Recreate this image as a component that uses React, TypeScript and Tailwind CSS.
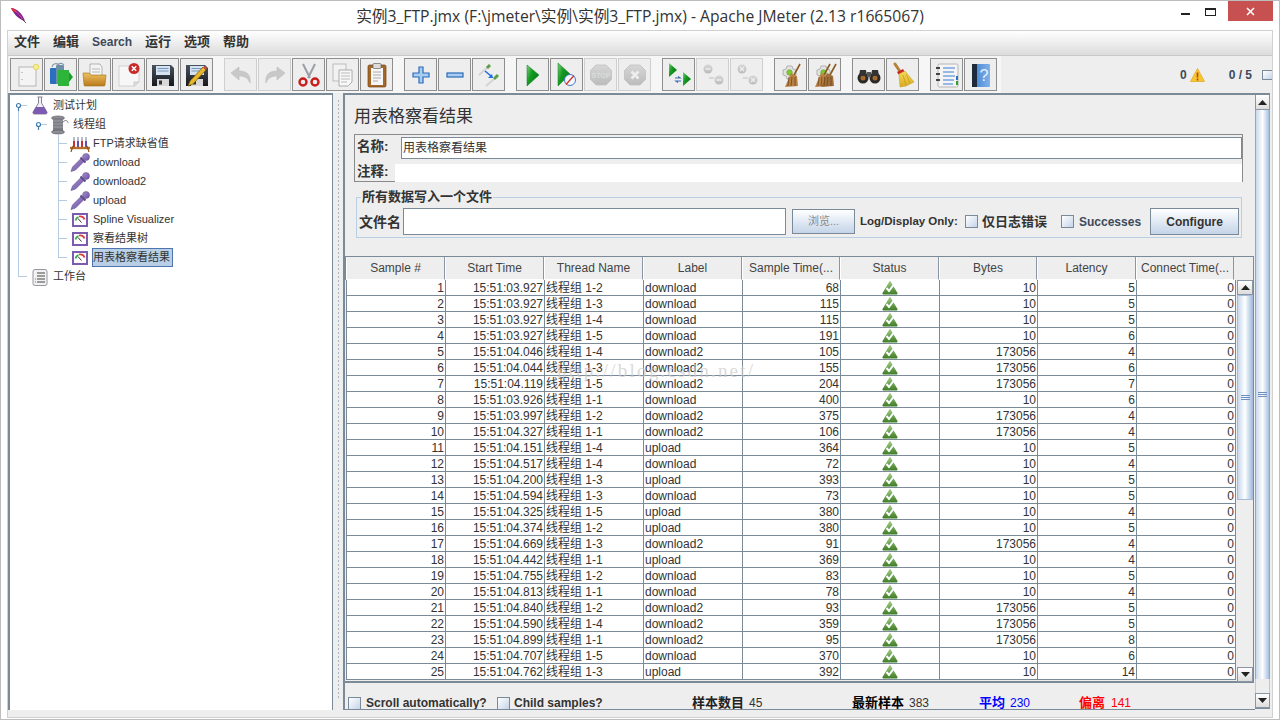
import React from "react";

const SANS = "font-['Liberation_Sans','Noto_Sans_CJK_SC',sans-serif]";

type Row = [number, string, string, string, number, number, number];
const rows: Row[] = [
  [1, "15:51:03.927", "线程组 1-2", "download", 68, 10, 5],
  [2, "15:51:03.927", "线程组 1-3", "download", 115, 10, 5],
  [3, "15:51:03.927", "线程组 1-4", "download", 115, 10, 5],
  [4, "15:51:03.927", "线程组 1-5", "download", 191, 10, 6],
  [5, "15:51:04.046", "线程组 1-4", "download2", 105, 173056, 4],
  [6, "15:51:04.044", "线程组 1-3", "download2", 155, 173056, 6],
  [7, "15:51:04.119", "线程组 1-5", "download2", 204, 173056, 7],
  [8, "15:51:03.926", "线程组 1-1", "download", 400, 10, 6],
  [9, "15:51:03.997", "线程组 1-2", "download2", 375, 173056, 4],
  [10, "15:51:04.327", "线程组 1-1", "download2", 106, 173056, 4],
  [11, "15:51:04.151", "线程组 1-4", "upload", 364, 10, 5],
  [12, "15:51:04.517", "线程组 1-4", "download", 72, 10, 4],
  [13, "15:51:04.200", "线程组 1-3", "upload", 393, 10, 5],
  [14, "15:51:04.594", "线程组 1-3", "download", 73, 10, 5],
  [15, "15:51:04.325", "线程组 1-5", "upload", 380, 10, 4],
  [16, "15:51:04.374", "线程组 1-2", "upload", 380, 10, 5],
  [17, "15:51:04.669", "线程组 1-3", "download2", 91, 173056, 4],
  [18, "15:51:04.442", "线程组 1-1", "upload", 369, 10, 4],
  [19, "15:51:04.755", "线程组 1-2", "download", 83, 10, 5],
  [20, "15:51:04.813", "线程组 1-1", "download", 78, 10, 4],
  [21, "15:51:04.840", "线程组 1-2", "download2", 93, 173056, 5],
  [22, "15:51:04.590", "线程组 1-4", "download2", 359, 173056, 5],
  [23, "15:51:04.899", "线程组 1-1", "download2", 95, 173056, 8],
  [24, "15:51:04.707", "线程组 1-5", "download", 370, 10, 6],
  [25, "15:51:04.762", "线程组 1-3", "upload", 392, 10, 14],
];

const S = ({ children, w = 26, h = 26, vb = "0 0 26 26" }: { children: React.ReactNode; w?: number; h?: number; vb?: string }) => (
  <svg width={w} height={h} viewBox={vb} className="block shrink-0">{children}</svg>
);

const Gradients = () => (
  <svg width="0" height="0" className="absolute">
    <defs>
      <linearGradient id="gGreen" x1="0" y1="0" x2="1" y2="0.6">
        <stop offset="0" stopColor="#7fd07f" />
        <stop offset="0.45" stopColor="#149a22" />
        <stop offset="1" stopColor="#0b7a17" />
      </linearGradient>
      <linearGradient id="gFolder" x1="0" y1="0" x2="0" y2="1">
        <stop offset="0" stopColor="#f0c060" />
        <stop offset="1" stopColor="#b87a1c" />
      </linearGradient>
      <linearGradient id="gGray" x1="0" y1="0" x2="0" y2="1">
        <stop offset="0" stopColor="#d6d6d6" />
        <stop offset="1" stopColor="#bcbcbc" />
      </linearGradient>
      <linearGradient id="gFloppy" x1="0" y1="0" x2="0" y2="1">
        <stop offset="0" stopColor="#4a5260" />
        <stop offset="1" stopColor="#16181c" />
      </linearGradient>
      <linearGradient id="gOk" x1="0" y1="0" x2="0" y2="1">
        <stop offset="0" stopColor="#a7d08a" />
        <stop offset="1" stopColor="#3c7d25" />
      </linearGradient>
      <linearGradient id="gHelp" x1="0" y1="0" x2="1" y2="0">
        <stop offset="0" stopColor="#3d7fd0" />
        <stop offset="1" stopColor="#80b2ea" />
      </linearGradient>
      <linearGradient id="gBroom" x1="0" y1="0" x2="0" y2="1">
        <stop offset="0" stopColor="#f5dc5a" />
        <stop offset="1" stopColor="#d9a91e" />
      </linearGradient>
      <linearGradient id="gDrop" x1="0" y1="0" x2="1" y2="1">
        <stop offset="0" stopColor="#a78fd0" />
        <stop offset="1" stopColor="#6f52a5" />
      </linearGradient>
    </defs>
  </svg>
);

const Floppy = () => (
  <>
    <path d="M2 3h19l3 3v18H2z" fill="url(#gFloppy)" />
    <rect x="6" y="4" width="14" height="9" fill="#d5e2f0" />
    <path d="M7.500 6.500h11M7.500 9h11" stroke="#6d8fb8" strokeWidth="0.9" />
    <rect x="7" y="17" width="12" height="7" fill="#d8d8d8" />
    <rect x="9" y="18.500" width="3" height="4" fill="#333" />
  </>
);

const Octagon = () => <path d="M8 3h10l5.500 5.500v9L18 23H8l-5.500-5.500v-9z" fill="url(#gGray)" stroke="#c0c0c0" strokeWidth="0.8" />;

const Broom = ({ x = 0, dark = false }: { x?: number; dark?: boolean }) => (
  <g transform={`translate(${x} 0)`}>
    <path d="M22 2l-6 11" stroke="#8a5a22" strokeWidth="1.600" />
    <path d="M13 11l6 3 1 10-13 1z" fill={dark ? "#a06e3a" : "#b98245"} />
    <path d="M11 15l-1 9M14 15l-1 9M17 15v9" stroke="#6e4518" strokeWidth="0.8" />
  </g>
);

const Gear = () => (
  <>
    <path d="M9 4h5l1 3 3 1v5l-3 1-1 3H9l-1-3-3-1V8l3-1z" fill="#e2e2e2" stroke="#a5a5a5" strokeWidth="0.8" />
    <circle cx="11.500" cy="10.500" r="2.800" fill="#80c838" stroke="#5a9a20" strokeWidth="0.5" />
  </>
);

const icons: Record<string, React.ReactNode> = {
  new: <S><rect x="5" y="5" width="17" height="19" fill="#f4f4f4" stroke="#a8a8a8" strokeWidth="0.8" /><path d="M8 10v1M8 17v1" stroke="#999" /><circle cx="22" cy="5" r="2.800" fill="#f7ee8c" stroke="#e2cf50" strokeWidth="0.800" /></S>,
  templates: <S><rect x="2" y="6" width="7" height="16" rx="1" fill="#2a6fc0" /><rect x="8" y="3" width="8" height="19" rx="1" fill="#6d8fa8" /><rect x="10" y="8" width="11" height="16" fill="#2db53a" /><path d="M21 10l4 5-4 5z" fill="#1f9a2e" /><path d="M4 5a4 4 0 0 1 7-2M9 4a4 4 0 0 1 7-1" fill="none" stroke="#8a98a8" strokeWidth="1.200" /></S>,
  open: <S><path d="M8 2h10l2 3v10H8z" fill="#f4f4f4" stroke="#999" strokeWidth="0.7" /><path d="M10 7h8M10 10h8" stroke="#aaa" strokeWidth="0.8" /><path d="M1 11h6l2 2h15l-1 10a1 1 0 0 1-1 1H3a1 1 0 0 1-1-1z" fill="url(#gFolder)" stroke="#a06e1a" strokeWidth="0.6" /></S>,
  close: <S><path d="M3 4h14v0l6 4v12l-4 4H3z" fill="#f7f7f7" stroke="#c8c8c8" strokeWidth="0.8" /><path d="M23 20h-5v4" fill="#ddd" stroke="#bbb" strokeWidth="0.7" /><circle cx="18" cy="6.500" r="5.500" fill="#c92a2a" /><path d="M15.800 4.300l4.400 4.400M20.200 4.300l-4.400 4.400" stroke="#fff" strokeWidth="1.500" /></S>,
  save: <S><Floppy /></S>,
  saveas: <S><Floppy /><path d="M4 24l2-5L19 5l3 3L9 22z" fill="#e8b82a" stroke="#6b5010" strokeWidth="0.7" /><path d="M19 5l3 3 1-2-2-2z" fill="#d34a3a" /></S>,
  undo: <S><path d="M3 11l8-6v4c8 0 12 4 11 12-2-5-5-7-11-7v4z" fill="#c8c8c8" stroke="#bcbcbc" strokeWidth="0.6" /></S>,
  redo: <S><path d="M23 11l-8-6v4C7 9 3 13 4 21c2-5 5-7 11-7v4z" fill="#c8c8c8" stroke="#bcbcbc" strokeWidth="0.6" /></S>,
  cut: <S><path d="M7 2l7 14M19 2l-7 14" stroke="#9aa0a6" strokeWidth="2" /><circle cx="7" cy="20" r="3.500" fill="none" stroke="#c81e1e" strokeWidth="2.400" /><circle cx="19" cy="20" r="3.500" fill="none" stroke="#c81e1e" strokeWidth="2.400" /></S>,
  copy: <S><rect x="3" y="2" width="13" height="17" fill="#f2f2f2" stroke="#b0b0b0" strokeWidth="0.8" /><path d="M9 8h13v12l-4 4H9z" fill="#f8f8f8" stroke="#9a9a9a" strokeWidth="0.8" /><path d="M11 11h9M11 14h9M11 17h9M11 20h6" stroke="#aaa" strokeWidth="0.8" /></S>,
  paste: <S><rect x="4" y="3" width="18" height="22" rx="1.500" fill="#a5672a" stroke="#6e4316" strokeWidth="0.7" /><rect x="7" y="6" width="12" height="17" fill="#f6f6f6" /><rect x="9" y="1.500" width="8" height="5" rx="1" fill="#dcdcdc" stroke="#666" strokeWidth="0.7" /><path d="M9 10h8M9 13h8M9 16h8M9 19h5" stroke="#999" strokeWidth="0.8" /></S>,
  plus: <S><path d="M11 5h4v6h6v4h-6v6h-4v-6H5v-4h6z" fill="#a8cdf0" stroke="#2a6cb8" strokeWidth="1.200" /></S>,
  minus: <S><rect x="5" y="11" width="16" height="4" fill="#a8cdf0" stroke="#2a6cb8" strokeWidth="1.200" /></S>,
  toggle: <S><path d="M3 13l9-8" stroke="#d4d4d4" strokeWidth="2" /><path d="M11 6l3-3" stroke="#5f9e48" strokeWidth="3" /><path d="M10 24l8-7" stroke="#d4d4d4" strokeWidth="2" /><path d="M18 17l4-4" stroke="#5f9e48" strokeWidth="3" /><path d="M9 9l6 5" stroke="#1f6fe0" strokeWidth="1.600" /><path d="M17 16l-5 0 4-4z" fill="#1f6fe0" /></S>,
  start: <S><path d="M7 3l12 10L7 24z" fill="url(#gGreen)" stroke="#0e7a1a" strokeWidth="0.5" /></S>,
  nt: <S><path d="M4 1l12 11L4 24z" fill="url(#gGreen)" stroke="#0e7a1a" strokeWidth="0.5" /><circle cx="16" cy="18" r="5.500" fill="#f4f8fc" stroke="#3f7bc8" strokeWidth="1" /><path d="M12 22.500l8-9" stroke="#d23030" strokeWidth="1.300" /></S>,
  stop: <S><Octagon /><text x="13" y="16" textAnchor="middle" fontSize="7" fontWeight="700" fill="#dcdcdc" fontFamily="Liberation Sans, sans-serif">STOP</text></S>,
  shutdown: <S><Octagon /><path d="M9.500 9.500l7 7M16.500 9.500l-7 7" stroke="#eee" strokeWidth="2.600" /></S>,
  remote: <S><path d="M3 1l8 7-8 7z" fill="url(#gGreen)" /><path d="M17 10l8 7-8 7z" fill="url(#gGreen)" /><path d="M9 16h5l-2-1.500M15 19h-5l2 1.500" fill="none" stroke="#3c6cb8" strokeWidth="1.200" /></S>,
  rstop: <S><circle cx="8" cy="7" r="4.500" fill="url(#gGray)" /><circle cx="19" cy="18" r="4.500" fill="url(#gGray)" /><path d="M5.500 7h5M16.500 18h5" stroke="#eee" strokeWidth="1.300" /><path d="M9 16h5" stroke="#c8c8c8" strokeWidth="1.200" /></S>,
  rshut: <S><circle cx="8" cy="7" r="4.500" fill="url(#gGray)" /><circle cx="19" cy="18" r="4.500" fill="url(#gGray)" /><path d="M6 5l4 4M10 5l-4 4M17 16l4 4M21 16l-4 4" stroke="#eee" strokeWidth="1.300" /><path d="M9 16h5" stroke="#c8c8c8" strokeWidth="1.200" /></S>,
  clear: <S><Gear /><Broom /></S>,
  clearall: <S><Gear /><Broom x={-4} /><Broom x={2} dark /></S>,
  search: <S><circle cx="7" cy="16" r="5.500" fill="#2a2a2a" /><circle cx="19" cy="16" r="5.500" fill="#2a2a2a" /><circle cx="7" cy="16" r="2.500" fill="#a56a2a" /><circle cx="19" cy="16" r="2.500" fill="#a56a2a" /><path d="M4 8h6l1 6H3zM16 8h6l1 6h-8z" fill="#333" /><rect x="11" y="10" width="4" height="5" fill="#555" /></S>,
  broom: <S><path d="M5 2l6 9" stroke="#b5843a" strokeWidth="3" strokeLinecap="round" /><path d="M7 10l6-3 1.500 2.500-6 3z" fill="#c8252b" /><path d="M9 12l6-3 9 11-8 4-6 1z" fill="url(#gBroom)" stroke="#c09820" strokeWidth="0.5" /><path d="M13 13l3 10M16 12l4 9" stroke="#c09820" strokeWidth="0.7" /></S>,
  log: <S><rect x="4" y="2" width="20" height="23" rx="1.500" fill="#f4f4f4" stroke="#a5a5a5" strokeWidth="0.8" /><path d="M9 6h12M9 10h11M9 14h12M9 18h11M9 22h10" stroke="#3a7ad6" strokeWidth="1.200" /><path d="M2 6h4M2 12h4M2 18h4" stroke="#444" strokeWidth="1.800" /><rect x="22" y="14" width="2" height="4" fill="#2c6fc0" /><rect x="22" y="19" width="2" height="4" fill="#2ca02c" /></S>,
  help: <S><rect x="4" y="2" width="18" height="23" rx="1" fill="url(#gHelp)" /><rect x="4" y="2" width="5" height="23" fill="#1d2a3a" /><text x="16" y="19" textAnchor="middle" fontSize="16" fill="#e8f2ff" fontFamily="Liberation Sans, sans-serif">?</text></S>,
};

const ToolBtn = ({ name, off = false }: { name: string; off?: boolean }) => (
  <div className={`flex h-[33px] w-[33px] items-center justify-center border bg-[#eeeeee] ${off ? "border-[#cfcfcf]" : "border-[#8e8e8e]"}`}>
    {icons[name]}
  </div>
);

const groups: [string, boolean?][][] = [
  [["new"], ["templates"], ["open"], ["close"], ["save"], ["saveas"]],
  [["undo", true], ["redo", true], ["cut"], ["copy"], ["paste"]],
  [["plus"], ["minus"], ["toggle"]],
  [["start"], ["nt"], ["stop", true], ["shutdown", true]],
  [["remote"], ["rstop", true], ["rshut", true]],
  [["clear"], ["clearall"]],
  [["search"], ["broom"]],
  [["log"], ["help"]],
];

const Flask = () => (
  <S w={18} h={19} vb="0 0 18 19">
    <path d="M6.500 1h5M7.500 1v6L2 16a1.500 1.500 0 0 0 1.500 2h11a1.500 1.500 0 0 0 1.500-2l-5.500-9V1" fill="#f2eef8" stroke="#7d7d8a" strokeWidth="0.9" />
    <path d="M5 11h8l3 5a1.500 1.500 0 0 1-1.500 2h-11A1.500 1.500 0 0 1 2 16z" fill="#7d5bb0" />
  </S>
);
const Spool = () => (
  <S w={20} h={20} vb="0 0 20 20">
    <ellipse cx="8" cy="3" rx="6.500" ry="2" fill="#8d8d94" stroke="#55555c" strokeWidth="0.6" />
    <rect x="3" y="3" width="10" height="13" fill="#7d7d86" />
    <path d="M3 6h10M3 9h10M3 12h10" stroke="#a8a8ae" strokeWidth="0.8" />
    <ellipse cx="8" cy="17" rx="6.500" ry="2" fill="#8d8d94" stroke="#55555c" strokeWidth="0.6" />
    <path d="M13 7c3-3 5-1 5 1" fill="none" stroke="#777" strokeWidth="0.9" />
  </S>
);
const Rack = () => (
  <S w={20} h={16} vb="0 0 20 16">
    <path d="M4 1v10M8 1v10M12 1v10M16 1v10" stroke="#b9b9c8" strokeWidth="2" />
    <path d="M4 5v6M12 5v6" stroke="#c7303a" strokeWidth="2" />
    <path d="M8 5v6M16 5v6" stroke="#5d4fb0" strokeWidth="2" />
    <path d="M0 12h20" stroke="#b3702a" strokeWidth="2.400" />
    <path d="M3 10l-2 6M17 10l2 6" stroke="#8a5418" strokeWidth="1.200" />
  </S>
);
const Pipette = () => (
  <S w={20} h={19} vb="0 0 20 19">
    <path d="M1 18.500l1.500-4.500L11 5.500 14 8.500 5.500 17z" fill="url(#gDrop)" stroke="#5c4a86" strokeWidth="0.6" />
    <path d="M10.500 4.500l5 5" stroke="#5c4a86" strokeWidth="2" />
    <circle cx="16" cy="4" r="3.500" fill="url(#gDrop)" stroke="#5c4a86" strokeWidth="0.5" />
  </S>
);
const Meter = () => (
  <S w={16} h={14} vb="0 0 16 14">
    <rect x="1" y="1" width="14" height="12" fill="#fff" stroke="#7d5bb0" strokeWidth="2" />
    <path d="M3.500 7.500a4.500 4.500 0 0 1 3-3.500" fill="none" stroke="#3da84a" strokeWidth="1.800" />
    <path d="M7 3.500a4.500 4.500 0 0 1 5.500 3" fill="none" stroke="#d8403a" strokeWidth="1.800" />
    <path d="M9.500 9.500L6 5.500" stroke="#333" strokeWidth="1" />
  </S>
);
const Workbench = () => (
  <S w={16} h={18} vb="0 0 16 18">
    <rect x="1" y="1.500" width="14" height="16" rx="2" fill="#f2f2f2" stroke="#8f8a96" strokeWidth="0.9" />
    <path d="M5 5h8M5 8h8M5 11h8M5 14h8" stroke="#444" strokeWidth="1" />
    <path d="M3 11h1M3 14h1" stroke="#3aa04a" strokeWidth="1" />
  </S>
);

const Guide = ({ kind, width }: { kind: string; width: number }) => {
  const c = "#b4cbe0";
  return (
    <svg width={width} height={19} className="block shrink-0">
      {kind === "root" && (
        <>
          <path d="M8.500 10v9M8 9.500h9" stroke={c} fill="none" />
          <circle cx="8.500" cy="9.500" r="2" fill="#fff" stroke="#3f7ab0" strokeWidth="1.200" />
          <path d="M8.500 12v3" stroke="#3f7ab0" strokeWidth="1.200" />
        </>
      )}
      {kind === "group" && (
        <>
          <path d="M8.500 0v19M28 9.500h9M48.500 15v4" stroke={c} fill="none" />
          <circle cx="28.500" cy="9.500" r="2" fill="#fff" stroke="#3f7ab0" strokeWidth="1.200" />
          <path d="M28.500 12v3" stroke="#3f7ab0" strokeWidth="1.200" />
        </>
      )}
      {kind === "leaf" && <path d="M8.500 0v19M48.500 0v19M48 9.500h9" stroke={c} fill="none" />}
      {kind === "last" && <path d="M8.500 0v19M48.500 0v10M48 9.500h9" stroke={c} fill="none" />}
      {kind === "end" && <path d="M8.500 0v10M8 9.500h9" stroke={c} fill="none" />}
    </svg>
  );
};

const tree: { kind: string; label: string; icon: React.ReactNode; sel?: boolean }[] = [
  { kind: "root", label: "测试计划", icon: <Flask /> },
  { kind: "group", label: "线程组", icon: <Spool /> },
  { kind: "leaf", label: "FTP请求缺省值", icon: <Rack /> },
  { kind: "leaf", label: "download", icon: <Pipette /> },
  { kind: "leaf", label: "download2", icon: <Pipette /> },
  { kind: "leaf", label: "upload", icon: <Pipette /> },
  { kind: "leaf", label: "Spline Visualizer", icon: <Meter /> },
  { kind: "leaf", label: "察看结果树", icon: <Meter /> },
  { kind: "last", label: "用表格察看结果", icon: <Meter />, sel: true },
  { kind: "end", label: "工作台", icon: <Workbench /> },
];

const guideWidth: Record<string, number> = { root: 20, group: 40, leaf: 60, last: 60, end: 20 };

const TreeRow = ({ kind, label, icon, sel }: (typeof tree)[number]) => (
  <div className="flex h-[19px] items-center">
    <Guide kind={kind} width={guideWidth[kind]} />
    <div className="flex w-[20px] shrink-0 justify-center">{icon}</div>
    <span className={`ml-[2px] pr-[2px] text-[11px] leading-[17px] whitespace-nowrap text-[#333] ${sel ? "border border-[#4f74b0] bg-[#b8cfe5]" : "border border-transparent"}`}>{label}</span>
  </div>
);

const Check = () => <div className="h-[13px] w-[13px] shrink-0 border border-[#7a8a99] bg-gradient-to-br from-white to-[#c4d4e8]" />;

const Status = () => (
  <svg width={16} height={15} viewBox="0 0 16 15" className="block">
    <path d="M8 0.500L15.500 13a1 1 0 0 1-1 1.500h-13a1 1 0 0 1-1-1.500z" fill="url(#gOk)" />
    <path d="M4.500 8l2.500 3 4.500-6" fill="none" stroke="#fff" strokeWidth="2" />
  </svg>
);

const Grip = () => (
  <div className="flex flex-col gap-px">
    <div className="h-px w-[9px] bg-[#6f8fc0]" />
    <div className="h-px w-[9px] bg-[#6f8fc0]" />
    <div className="h-px w-[9px] bg-[#6f8fc0]" />
  </div>
);

const Arrow = ({ up = false }: { up?: boolean }) => (
  <svg width={9} height={5} viewBox="0 0 9 5" className="block">
    <path d={up ? "M0 5L4.500 0 9 5z" : "M0 0l4.500 5L9 0z"} fill="#222" />
  </svg>
);

const headers = ["Sample #", "Start Time", "Thread Name", "Label", "Sample Time(...", "Status", "Bytes", "Latency", "Connect Time(..."];
const COLS = "grid grid-cols-[99px_99px_99px_99px_98px_99px_98px_99px_99px]";
const CELL = "h-[16px] overflow-hidden border-r border-b border-[#7a8a99] bg-white px-px text-[12px] leading-[17px] whitespace-nowrap text-[#333]";

export default function App() {
  return (
    <div className={`h-[720px] w-[1280px] overflow-hidden border border-[#bdbdbd] bg-white ${SANS}`}>
      <Gradients />
      {/* title bar */}
      <div className="flex h-[29px]">
        <div className="w-[50px] pt-[6px] pl-[9px]">
          <svg width={17} height={17} viewBox="0 0 17 17" className="block">
            <path d="M1 1c5 0 11 5 14 13-5-1-11-6-14-13z" fill="#7a1e90" />
            <path d="M1 1c2 0 4 1 6 3L4 5C3 4 2 3 1 1z" fill="#e03040" />
            <path d="M5 4c3 2 6 5 8 9" stroke="#e050a0" strokeWidth="1" fill="none" />
            <path d="M12 12l4 4" stroke="#333" strokeWidth="0.8" />
          </svg>
        </div>
        <div className="flex flex-1 justify-center pt-[2px] pl-[60px]">
          <span className="font-['Open_Sans','Noto_Sans_CJK_SC',sans-serif] text-[15.7px] leading-[27px] whitespace-nowrap text-[#333]">实例3_FTP.jmx (F:\jmeter\实例\实例3_FTP.jmx) - Apache JMeter (2.13 r1665067)</span>
        </div>
        <div className="flex h-[20px] items-start">
          <div className="flex h-[20px] w-[32px] items-start justify-center pt-[12px]"><div className="h-[2px] w-[9px] bg-[#222]" /></div>
          <div className="flex h-[20px] w-[27px] items-start justify-center pt-[7px] pr-[9px]"><div className="h-[8px] w-[11px] border border-t-2 border-[#222]" /></div>
          <div className="flex h-[20px] w-[45px] items-center justify-center bg-[#c75050]">
            <svg width={9} height={9} viewBox="0 0 9 9" className="block"><path d="M1 1l7 7M8 1L1 8" stroke="#fff" strokeWidth="1.500" /></svg>
          </div>
        </div>
        <div className="w-[6px]" />
      </div>

      {/* application frame */}
      <div className="mx-[6px] flex h-[688px] flex-col border-x border-t border-b border-[#d0d0d0] bg-[#eeeeee]">
        {/* menu */}
        <div className="flex h-[25px] shrink-0 items-center gap-[13px] border-b border-[#c8c8c8] bg-gradient-to-b from-white to-[#dcdcdc] pb-[2px] pl-[6px] text-[13px] font-bold text-[#333]">
          <span>文件</span>
          <span>编辑</span>
          <span className="text-[12px] text-[#3d4a5c]">Search</span>
          <span>运行</span>
          <span>选项</span>
          <span>帮助</span>
        </div>
        {/* toolbar */}
        <div className="flex h-[37px] shrink-0 items-center">
          <div className="ml-px flex h-[37px] items-center gap-[11px] bg-[#f6f6f6] pr-[4px] pl-[1px]">
            {groups.map((g, i) => (
              <div key={i} className="flex gap-px">
                {g.map(([n, off]) => (
                  <ToolBtn key={n} name={n} off={!!off} />
                ))}
              </div>
            ))}
          </div>
          <div className="flex flex-1 items-center justify-end gap-[3px] text-[12px] font-bold text-[#3d4a5c]">
            <span>0</span>
            <svg width={15} height={14} viewBox="0 0 15 14" className="block">
              <path d="M7.500 0.500L14.500 13.500H0.500z" fill="#f7c82e" stroke="#e0a020" strokeWidth="0.7" />
              <path d="M7.500 4.500v5M7.500 10.500v2" stroke="#b8401a" strokeWidth="1.600" />
            </svg>
            <span className="mr-[7px] ml-[21px]">0 / 5</span>
            <div className="h-[10px] w-[10px] border border-r-0 border-[#7a8a99] bg-gradient-to-br from-white to-[#c4d4e8]" />
          </div>
        </div>

        {/* main */}
        <div className="flex min-h-0 flex-1">
          {/* tree */}
          <div className="h-[617px] w-[325px] shrink-0 border-t-2 border-r border-l-2 border-[#7a8a99] bg-white pt-[1px]">
            {tree.map((t) => (
              <TreeRow key={t.label} {...t} />
            ))}
          </div>
          {/* divider */}
          <div className="flex w-[10px] shrink-0 justify-center pt-[6px]">
            <div className="h-[600px] w-[3px] bg-[radial-gradient(#aab4c0_1px,transparent_1px)] bg-[length:3px_4px]" />
          </div>
          {/* right */}
          <div className="flex h-[617px] w-[912px] shrink-0 flex-col overflow-hidden border-t-2 border-b border-l-2 border-[#7a8a99]">
            <div className="h-[39px] shrink-0 pt-[11px] pl-[9px] text-[17px] leading-[22px] text-[#333]">用表格察看结果</div>
            {/* name box */}
            <div className="ml-[9px] h-[48px] w-[889px] shrink-0 border border-[#8a8a8a] pl-[2px]">
              <div className="flex h-[24px] items-center pt-px">
                <span className="w-[44px] shrink-0 text-[13.5px] font-bold text-[#333]">名称:</span>
                <div className="flex h-[22px] w-[842px] items-center border border-[#7a8a99] bg-white pl-px text-[12px] text-[#333]">用表格察看结果</div>
              </div>
              <div className="flex h-[24px] items-end pb-px">
                <span className="w-[38px] shrink-0 text-[13.5px] font-bold text-[#333]">注释:</span>
                <div className="h-[18px] flex-1 bg-white" />
              </div>
            </div>
            {/* group */}
            <div className="relative mt-[15px] ml-[11px] flex h-[41px] w-[886px] shrink-0 items-center border border-[#b8cfe5] pt-[8px]">
              <span className="absolute top-[-9px] left-[4px] bg-[#eeeeee] px-px text-[13px] leading-[16px] font-bold text-[#333]">所有数据写入一个文件</span>
              <span className="ml-[2px] w-[44px] shrink-0 text-[14px] leading-[18px] font-bold text-[#333]">文件名</span>
              <div className="h-[27px] w-[383px] shrink-0 border border-[#7a8a99] bg-white" />
              <div className="ml-[6px] flex h-[25px] w-[63px] shrink-0 items-center justify-center border border-[#7a8a99] bg-gradient-to-b from-white to-[#c4d4e8] text-[11px] text-[#8a8a8a]">浏览...</div>
              <span className="ml-[5px] w-[97px] shrink-0 text-[11.5px] font-bold whitespace-nowrap text-[#333]">Log/Display Only:</span>
              <div className="ml-[8px]"><Check /></div>
              <span className="ml-[4px] text-[13px] font-bold whitespace-nowrap text-[#333]">仅日志错误</span>
              <div className="ml-[14px]"><Check /></div>
              <span className="ml-[5px] text-[12px] font-bold text-[#3d4a5c]">Successes</span>
              <div className="ml-[9px] flex h-[27px] w-[89px] shrink-0 items-center justify-center border border-[#7a8a99] bg-gradient-to-b from-white to-[#c4d4e8] text-[12px] font-bold text-[#333]">Configure</div>
            </div>

            {/* table */}
            <div className="mt-[18px] w-[909px] shrink-0 border-r border-[#7a8a99]">
              <div className={`${COLS} h-[24px] border-t border-l border-[#7a8a99] pr-[10px]`}>
                {headers.map((h, i) => (
                  <div key={h} className={`flex h-[23px] items-center justify-center overflow-hidden border-r border-b border-l border-r-[#8896a5] border-b-white border-l-white bg-[#eeeeee] text-[12px] whitespace-nowrap text-[#444] ${i === 8 ? "w-[98px]" : ""}`}>
                    {h}
                  </div>
                ))}
              </div>
              <div className="flex">
                <div className="relative w-[892px] shrink-0 border-b-2 border-[#7a8a99]">
                  <div className="ml-px border-l border-[#7a8a99]">
                    {rows.map((r) => (
                      <div key={r[0]} className={COLS}>
                        <div className={`${CELL} text-right`}>{r[0]}</div>
                        <div className={`${CELL} text-right`}>{r[1]}</div>
                        <div className={CELL}>{r[2]}</div>
                        <div className={CELL}>{r[3]}</div>
                        <div className={`${CELL} text-right`}>{r[4]}</div>
                        <div className={`${CELL} flex justify-center`}><Status /></div>
                        <div className={`${CELL} text-right`}>{r[5]}</div>
                        <div className={`${CELL} text-right`}>{r[6]}</div>
                        <div className={`${CELL} text-right`}>0</div>
                      </div>
                    ))}
                  </div>
                  {/* watermark */}
                  <span className="pointer-events-none absolute top-[81px] left-[212px] font-['Liberation_Serif',serif] text-[19px] leading-[20px] tracking-[2.200px] whitespace-nowrap text-[#c9c9c9]/70">http://blog.csdn.net/</span>
                </div>
                {/* inner scrollbar */}
                <div className="flex h-[403px] w-[16px] shrink-0 flex-col border-b border-[#7a8a99]">
                  <div className="flex h-[15px] shrink-0 items-center justify-center border border-[#8896a5] bg-gradient-to-b from-white to-[#dcdcdc]"><Arrow up /></div>
                  <div className="flex h-[205px] shrink-0 items-center justify-center border border-[#a6bcd8] bg-gradient-to-r from-[#c8d8ec] via-white to-[#a6c0e0]"><Grip /></div>
                  <div className="flex-1 bg-[#eeeeee]" />
                  <div className="flex h-[15px] shrink-0 items-center justify-center border border-[#8896a5] bg-gradient-to-b from-white to-[#dcdcdc]"><Arrow /></div>
                </div>
              </div>
            </div>

            {/* bottom line */}
            <div className="mt-[13px] flex h-[16px] items-start pl-[3px] text-[12px] leading-[14px] font-bold whitespace-nowrap text-[#333]">
              <div className="mt-px"><Check /></div>
              <span className="ml-[5px] w-[131px]">Scroll automatically?</span>
              <div className="mt-px"><Check /></div>
              <span className="ml-[4px] w-[178px]">Child samples?</span>
              <span className="w-[57px] text-[13px] text-[#222]">样本数目</span>
              <span className="w-[103px] font-normal text-[#333]">45</span>
              <span className="w-[57px] text-[13px] text-black">最新样本</span>
              <span className="w-[70px] font-normal text-[#333]">383</span>
              <span className="w-[31px] text-[13px] text-[#0000ff]">平均</span>
              <span className="w-[69px] font-normal text-[#0000ff]">230</span>
              <span className="w-[32px] text-[13px] text-[#ff0000]">偏离</span>
              <span className="font-normal text-[#ff0000]">141</span>
            </div>
          </div>
          {/* outer scrollbar */}
          <div className="flex h-[616px] w-[15px] shrink-0 flex-col border-t-2 border-b border-[#7a8a99]">
            <div className="flex h-[15px] shrink-0 items-center justify-center border-x border-b border-[#8896a5] bg-gradient-to-b from-white to-[#dcdcdc]"><Arrow up /></div>
            <div className="flex h-[569px] shrink-0 items-center justify-center border-x border-[#8aa8d0] bg-gradient-to-r from-[#c8d8ec] via-white to-[#a6c0e0]"><Grip /></div>
            <div className="flex-1 border-x border-[#c8c8c8] bg-[#eeeeee]" />
            <div className="flex h-[15px] shrink-0 items-center justify-center border border-[#8896a5] bg-gradient-to-b from-white to-[#dcdcdc]"><Arrow /></div>
          </div>
        </div>
      </div>
    </div>
  );
}
